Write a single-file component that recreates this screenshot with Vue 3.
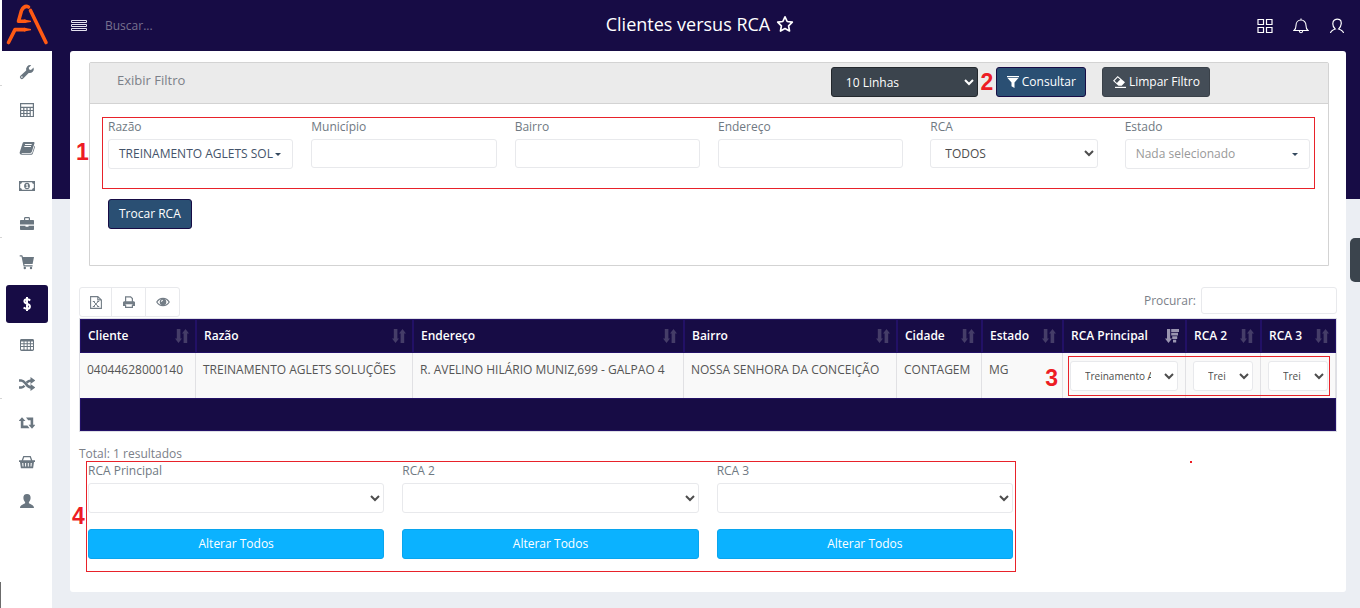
<script setup>
import { ref } from 'vue'

const tools = [
  { name: 'Configurações', icon: 'wrench' },
  { name: 'Calculadora', icon: 'calc', tick: true },
  { name: 'Cadastros', icon: 'book' },
  { name: 'Pagamentos', icon: 'money' },
  { name: 'Comercial', icon: 'briefcase' },
  { name: 'Compras', icon: 'cart', tick: true },
  { name: 'Vendas', icon: 'dollar', active: true }
]
const reports = [
  { name: 'Tabelas', icon: 'table' },
  { name: 'Transferências', icon: 'shuffle' },
  { name: 'Trocas', icon: 'retweet', tick: true },
  { name: 'Cesta', icon: 'basket' },
  { name: 'Usuário', icon: 'user' }
]
const groups = [tools, reports]

const icons = {
  wrench: '<path d="M14.6 3.6 12 5.9l-1.8-.4-.5-1.8L12.200 1.200A4.200 4.200 0 0 0 7.200 6.500L1.500 11.800a1.900 1.900 0 1 0 2.700 2.700L9.700 9a4.200 4.200 0 0 0 4.900-5.400ZM2.900 13.900a.8.8 0 1 1 0-1.600.8.8 0 0 1 0 1.600Z" fill="currentColor"/>',
  calc: '<path d="M1 1h14v14H1V1Zm1.200 1.200v2.600h11.600V2.200H2.200Zm0 3.900V8h2V6.100h-2Zm3.200 0V8h2V6.100h-2Zm3.200 0V8h2V6.100h-2Zm3.200 0V8h2V6.100h-2ZM2.200 9.100v1.800h2V9.100h-2Zm3.200 0v1.800h2V9.100h-2Zm3.200 0v1.800h2V9.100h-2Zm3.200 0v4.800h2V9.100h-2ZM2.200 12v1.900h2V12h-2Zm3.200 0v1.900h2V12h-2Zm3.200 0v1.900h2V12h-2Z" fill="currentColor" fill-rule="evenodd"/>',
  book: '<path d="M5.200 2h9.200c1 0 1.300.7 1 1.600l-2.500 8c-.3.900-.9 1.300-1.700 1.300H3.100c-.8 0-.8.700.1.900h8.300c1 0 1.600-.4 1.900-1.300l2.200-6.800c.5.400.5.900.3 1.600l-2 6c-.3 1-1 1.500-2 1.500H2.800c-1.600 0-2.500-1.500-2-2.700L3.500 3.500C3.800 2.500 4.300 2 5.200 2Zm1 2-.3 1h6.600l.3-1H6.200Zm-.7 2-.3 1h6.600l.3-1H5.500Z" fill="currentColor" fill-rule="evenodd"/>',
  money: '<path d="M0 3h16v10H0V3Zm3 1.300A2 2 0 0 1 1.200 6v4A2 2 0 0 1 3 11.700h10A2 2 0 0 1 14.800 10V6A2 2 0 0 1 13 4.300H3Z" fill="currentColor" fill-rule="evenodd"/><path d="M8 4.800c2 0 2.900 1.500 2.900 3.200S10 11.200 8 11.200 5.100 9.700 5.100 8 6 4.800 8 4.800Zm-.2 1.300-1.100.8.500.6.400-.2v2h-.9v.8h2.700v-.8h-.7v-3.200h-.9Z" fill="currentColor" fill-rule="evenodd"/>',
  briefcase: '<path d="M5 4V2.500C5 1.700 5.500 1 6.300 1h3.400c.8 0 1.300.7 1.300 1.500V4h3c.6 0 1 .4 1 1v3.500H1V5c0-.6.400-1 1-1h3Zm1.200 0h3.600V2.200H6.200V4ZM1 9.700h5.500v1h3v-1H15V13c0 .6-.4 1-1 1H2c-.6 0-1-.4-1-1V9.700Z" fill="currentColor" fill-rule="evenodd"/>',
  cart: '<path d="M.7 1.300h2.500L4 3h11l-1.400 7H5.300l.3 1.200h8v1.200h-9L2.500 2.500H.7V1.300Z" fill="currentColor"/><circle cx="5.800" cy="14" r="1.200" fill="currentColor"/><circle cx="12" cy="14" r="1.200" fill="currentColor"/>',
  dollar: '<path d="M11.200 4.500C10.300 3.700 9.200 3.300 8 3.300c-1.700 0-2.600.9-2.600 2 0 3 5.500 1.900 5.500 5.100 0 1.500-1.200 2.400-3 2.400-1.300 0-2.400-.4-3.300-1.200M8 1v14" fill="none" stroke="currentColor" stroke-width="2"/>',
  table: '<path d="M2.500 2h11c.8 0 1.500.6 1.500 1.400v9.200c0 .8-.7 1.400-1.500 1.400h-11c-.8 0-1.500-.6-1.500-1.400V3.400C1 2.600 1.700 2 2.500 2ZM2 4.600v1.700h2.500V4.600H2Zm3.500 0v1.700h2.200V4.600H5.500Zm3.200 0v1.700h2.200V4.600H8.700Zm3.200 0v1.700H14V4.600h-2.100ZM2 7.300V9h2.500V7.300H2Zm3.500 0V9h2.200V7.300H5.500Zm3.200 0V9h2.200V7.300H8.700Zm3.200 0V9H14V7.300h-2.100ZM2 10v2.500h2.500V10H2Zm3.500 0v2.500h2.200V10H5.500Zm3.200 0v2.500h2.200V10H8.700Zm3.200 0v2.500H14V10h-2.100Z" fill="currentColor" fill-rule="evenodd"/>',
  shuffle: '<path d="M0 4.500h2.300c2 0 3 1.200 4.500 3.200 1.800 2.600 3 3.800 5.600 3.800M0 11.500h2.300c1.400 0 2.300-.6 3.200-1.700M7.600 6.600C8.900 5.100 10.200 4.500 12.400 4.500" fill="none" stroke="currentColor" stroke-width="2.400"/><path d="m11.500 1 5 3.500-5 3.500V1Zm0 7 5 3.500-5 3.500V8Z" fill="currentColor"/>',
  retweet: '<path d="M3 2.200 6.500 6H4.400v4.500h4l2.100 2.700H1.800V6H-.5L3 2.200Zm4 .4h7.200V9.800h2.300L13 13.800 9.500 9.800h2.100V5.300H9.200L7 2.600Z" fill="currentColor"/>',
  basket: '<path d="M4.300 2h7.400l1.600 4.300H16V8h-1l-.9 6.200H1.900L1 8H0V6.300h2.700L4.300 2Zm.9 1.200L4.100 6.300h7.800l-1.100-3.100H5.200ZM3.200 9l.3 3.500h1L4.300 9H3.200Zm2.900 0v3.500h1V9h-1Zm2.700 0v3.500h1V9h-1Zm2.900 0-.2 3.500h1l.3-3.500h-1.100Z" fill="currentColor" fill-rule="evenodd"/>',
  user: '<path d="M8 1c2.500 0 3.800 1.600 3.600 4.100-.1 1.600-.7 3-1.700 3.900v1.200c.7.800 5.100 1.300 5.100 4.800H1C1 11.500 5.400 11 6.100 10.200V9c-1-.9-1.600-2.300-1.700-3.900C4.200 2.600 5.500 1 8 1Z" fill="currentColor"/>'
}

const columns = [
  { label: 'Cliente', width: 116 },
  { label: 'Razão', width: 217 },
  { label: 'Endereço', width: 271 },
  { label: 'Bairro', width: 213 },
  { label: 'Cidade', width: 85 },
  { label: 'Estado', width: 81 },
  { label: 'RCA Principal', width: 123, sorted: true },
  { label: 'RCA 2', width: 75 },
  { label: 'RCA 3', width: 75 }
]
const rows = [
  ['04044628000140', 'TREINAMENTO AGLETS SOLUÇÕES', 'R. AVELINO HILÁRIO MUNIZ,699 - GALPAO 4', 'NOSSA SENHORA DA CONCEIÇÃO', 'CONTAGEM', 'MG']
]
const rcas = ['RCA Principal', 'RCA 2', 'RCA 3']
const search = ref('')
</script>

<template>
  <div class="app">
    <aside class="sidebar">
      <a class="logo" href="#" aria-label="Início">
        <svg viewBox="0 0 50 51" width="50" height="51">
          <g fill="none" stroke="#ff5a14" stroke-width="3.600" stroke-linecap="round" stroke-linejoin="round">
            <path d="M44 42.500 28.500 10.500" />
            <path d="M26.500 7Q22.500 5 19.500 10.500L16.500 21.300H23" />
            <path d="M6.500 42.500 13 29.600H23" />
          </g>
          <path d="M22 19.500 29 20.700V22L22 23.100ZM22 27.800 29 29V30.300L22 31.400Z" fill="#ff5a14" />
        </svg>
      </a>
      <nav class="menu" aria-label="Menu principal">
        <ul v-for="(group, g) in groups" :key="g" class="group">
          <li v-for="item in group" :key="item.name" :class="{ active: item.active, tick: item.tick }">
            <a href="#" :aria-label="item.name">
              <svg viewBox="0 0 16 16" width="16" height="16" v-html="icons[item.icon]"></svg>
            </a>
          </li>
        </ul>
      </nav>
    </aside>

    <div class="page">
      <header class="topbar">
        <div class="left">
          <button class="plain" type="button" aria-label="Alternar menu">
            <svg viewBox="0 0 16 14" width="16" height="14"><path d="M.5 1.500h15v2H.5zM.5 5.500h15v2H.5zM.5 9.500h15v2H.5z" fill="none" stroke="#e4e2ee" /></svg>
          </button>
          <input class="find" type="text" placeholder="Buscar..." aria-label="Buscar" />
        </div>
        <h1>Clientes versus RCA
          <svg viewBox="0 0 18 18" width="18" height="18"><path d="m9 1.800 2.200 4.700 5.100.7-3.700 3.600.9 5.200L9 13.500 4.500 16l.9-5.200L1.700 7.200l5.100-.7Z" fill="none" stroke="#fff" stroke-width="1.700" stroke-linejoin="round" /></svg>
        </h1>
        <div class="right">
          <button class="plain" type="button" aria-label="Aplicativos">
            <svg viewBox="0 0 16 16" width="16" height="16"><path d="M1 1.500h5.500v5H1zM9.500 1.500H15v5H9.500zM1 9.500h5.500v5H1zM9.500 9.500H15v5H9.500z" fill="none" stroke="#fff" stroke-width="1.200" /></svg>
          </button>
          <button class="plain" type="button" aria-label="Notificações">
            <svg viewBox="0 0 16 16" width="16" height="16"><path d="M1 12.500c1.700-1.200 2-2.500 2-5C3 4.200 5 2 8 2s5 2.200 5 5.500c0 2.500.3 3.800 2 5H1ZM6.300 13q.3 1.800 1.700 1.800T9.700 13M8 .5V2" fill="none" stroke="#fff" stroke-width="1.100" /></svg>
          </button>
          <button class="plain" type="button" aria-label="Minha conta">
            <svg viewBox="0 0 16 16" width="16" height="16"><path d="M1.500 15c.3-2 1.500-2.800 4.700-4C2.800 8.200 3.400 3 5.600 1.900 7 1 9.300 1 10.700 1.600c2.400 1.300 2 6.700-1 9.400 3.300 1.200 4.500 2 4.800 4" fill="none" stroke="#fff" stroke-width="1.200" /></svg>
          </button>
        </div>
      </header>

      <main class="card">
        <section class="filter">
          <div class="filter-head">
            <span>Exibir Filtro</span>
            <div class="actions">
              <select class="lines" aria-label="Linhas por página"><option>10 Linhas</option></select>
              <span class="mark mark-2">2</span>
              <button class="btn blue" type="button">
                <svg viewBox="0 0 12 12" width="12" height="12"><path d="M0 0h12v1.200H0ZM.5 2h11L7.500 6.500V12l-3-1.800V6.500Z" fill="#fff" /></svg>
                Consultar
              </button>
              <button class="btn gray" type="button">
                <svg viewBox="0 0 13 12" width="13" height="12"><path d="M4.700 0 12 6.200 8.700 9.800H5.500L0 4.800ZM4.700 1.500 1.600 4.800l2.300 2.100 3.300-3.300Z" fill="#fff" fill-rule="evenodd" /><path d="M2 10.800h11V12H2Z" fill="#fff" /></svg>
                Limpar Filtro
              </button>
            </div>
          </div>
          <div class="filter-body">
            <div class="fields marked">
              <span class="mark mark-1">1</span>
              <div class="field">
                <label for="razao">Razão</label>
                <button id="razao" class="picker" type="button"><span>TREINAMENTO AGLETS SOL</span><i class="caret"></i></button>
              </div>
              <div class="field"><label for="municipio">Município</label><input id="municipio" class="control" type="text" /></div>
              <div class="field"><label for="bairro">Bairro</label><input id="bairro" class="control" type="text" /></div>
              <div class="field"><label for="endereco">Endereço</label><input id="endereco" class="control" type="text" /></div>
              <div class="field inner">
                <label for="rca">RCA</label>
                <select id="rca" class="control"><option>TODOS</option></select>
              </div>
              <div class="field">
                <label for="estado">Estado</label>
                <button id="estado" class="picker empty" type="button"><span>Nada selecionado</span><i class="caret"></i></button>
              </div>
            </div>
            <button class="btn blue" type="button">Trocar RCA</button>
          </div>
        </section>

        <section class="results">
          <div class="toolbar">
            <div class="exports">
              <button type="button" aria-label="Exportar para Excel">
                <svg viewBox="0 0 12 14" width="12" height="14"><path d="M.6 1.600h7.200l3.600 3.300v8.500H.6ZM7.800 1.600v3.300h3.600" fill="none" stroke="currentColor" stroke-width="1.100" /><path d="m3.600 6.500 4.600 5M8.200 6.500l-4.600 5M2.800 6.500h2M7.200 6.500h2M2.800 11.500h2M7.200 11.500h2" stroke="currentColor" fill="none" /></svg>
              </button>
              <button type="button" aria-label="Imprimir">
                <svg viewBox="0 0 12 12" width="12" height="12"><path d="M2.600 6V.8h5L9.400 2.600V6M2.600 8.800v2.500h6.800V8.800" fill="none" stroke="currentColor" stroke-width="1.200" /><path d="M1.500 5.200h9c.8 0 1.500.6 1.500 1.400V10H9.500V8.200h-7V10H0V6.600c0-.8.700-1.400 1.500-1.400Z" fill="currentColor" /></svg>
              </button>
              <button type="button" aria-label="Colunas visíveis">
                <svg viewBox="0 0 14 10" width="14" height="10"><path d="M.8 5C3.600.1 10.400.1 13.200 5 10.400 9.900 3.600 9.900.8 5Z" fill="none" stroke="currentColor" stroke-width="1.200" /><path d="M7 1.700a3.300 3.300 0 1 1 0 6.600 3.300 3.300 0 0 1 0-6.600Zm0 1A2 2 0 0 0 5 4.800h1A1.200 1.200 0 0 1 7 3.600Z" fill="currentColor" fill-rule="evenodd" /></svg>
              </button>
            </div>
            <label class="search">Procurar: <input v-model="search" type="search" /></label>
          </div>

          <table>
            <colgroup><col v-for="c in columns" :key="c.label" :style="{ width: c.width + 'px' }" /></colgroup>
            <thead>
              <tr>
                <th v-for="c in columns" :key="c.label" scope="col">
                  <div class="head">
                    <span>{{ c.label }}</span>
                    <svg v-if="c.sorted" class="sorted" viewBox="0 0 14 14" width="14" height="14"><path d="M2 0h3.200v9.500H7L3.500 14 0 9.500h2ZM6.200 0H14v3.100H6.200ZM6.200 3.700H13v2.900H6.200ZM7.200 7.200h5v2.900h-5ZM8 10.700h3.200v2.900H8Z" fill="currentColor" /></svg>
                    <svg v-else viewBox="0 0 14 14" width="14" height="14"><path d="M1.800 0h3.600v9.500H7L3.500 14 0 9.500h1.800ZM10.500 0 14 4.500h-1.800V14H8.600V4.500H7Z" fill="currentColor" /></svg>
                  </div>
                </th>
              </tr>
            </thead>
            <tbody>
              <tr v-for="row in rows" :key="row[0]">
                <td v-for="(cell, i) in row" :key="i">{{ cell }}<span v-if="i === 5" class="mark mark-3">3</span></td>
                <td v-for="(r, i) in rcas" :key="r" class="pick" :class="{ first: i === 0 }">
                  <select class="control" :aria-label="r"><option>Treinamento Aglets</option></select>
                </td>
              </tr>
            </tbody>
            <tfoot><tr><td colspan="9"></td></tr></tfoot>
          </table>

          <p class="total">Total: 1 resultados</p>
          <div class="bulk">
            <div class="bulk-inner marked">
              <span class="mark mark-4">4</span>
              <div v-for="(r, i) in rcas" :key="r" class="bulk-item">
                <label :for="'bulk' + i">{{ r }}</label>
                <select :id="'bulk' + i" class="control"><option></option></select>
                <button class="btn cyan" type="button">Alterar Todos</button>
              </div>
            </div>
            <i class="dot"></i>
          </div>
        </section>
      </main>
      <button class="side-handle" type="button" aria-label="Abrir painel"></button>
    </div>
  </div>
</template>

<style>
body { background: #ebeef3; }
</style>

<style scoped>
*, *::before, *::after { box-sizing: border-box; }
.app {
  display: flex;
  min-height: 100vh;
  font-family: "Open Sans", "Noto Sans", sans-serif;
  font-size: 12px;
  line-height: 18px;
  color: #7b8088;
}
button, input, select { font: inherit; color: inherit; margin: 0; }
button { cursor: pointer; }
ul { list-style: none; margin: 0; padding: 0; }

.sidebar { position: relative; flex: 0 0 52px; background: #fff; }
.sidebar::after { content: ""; position: absolute; left: 0; bottom: 0; width: 1px; height: 26px; background: #6b6b6b; }
.logo { display: block; height: 51px; margin-left: 2px; background: #170c45; }
.logo svg { display: block; }
.menu { padding: 2px 4px 0 6px; }
.group + .group { display: grid; gap: 1px; margin-top: 3px; }
.group li { position: relative; }
.group a {
  display: flex; align-items: center; justify-content: center;
  height: 38px; border-radius: 3px; color: #6a7680;
}
.group .active { margin-top: 4px; }
.group .active a { background: #170c45; color: #fff; }
.tick::before {
  content: ""; position: absolute; left: -6px; top: -6px;
  width: 2px; height: 1px; background: #d5d5d5;
}

.page {
  position: relative; flex: 1; min-width: 0; padding: 0 14px 16px 18px;
  background: linear-gradient(#170c45 199px, #ebeef3 199px);
}
.topbar { display: grid; grid-template-columns: 1fr auto 1fr; align-items: center; height: 51px; padding-left: 1px; color: #fff; }
.left { display: flex; align-items: center; gap: 18px; }
.right { display: flex; justify-content: flex-end; gap: 20px; padding-right: 1px; }
.plain { display: flex; padding: 0; border: 0; background: none; }
.find { width: 160px; padding: 0; border: 0; background: none; outline: 0; font-size: 12px; }
.find::placeholder { color: #77718f; opacity: 1; }
h1 { display: flex; align-items: center; gap: 6px; margin: 0; padding: 0 17px 4px 0; font-size: 18px; line-height: 24px; font-weight: 400; }

.card { padding: 11px 9px 20px; border-radius: 3px; background: #fff; }
.filter { margin: 0 8px 0 10px; border: 1px solid #d3d3d3; border-radius: 2px 2px 0 0; }
.filter-head {
  display: flex; align-items: flex-start; justify-content: space-between;
  padding: 4px 118px 6px 27px; border-bottom: 1px solid #d3d3d3; background: #ebebeb; font-size: 13px;
}
.filter-head > span { padding-top: 4px; }
.actions { display: flex; }
.actions .gray { margin-left: 16px; }
.actions .btn { padding: 0 9px 0 10px; }
.mark-2 { width: 18px; text-align: center; }
.btn {
  display: inline-flex; align-items: center; justify-content: center; gap: 3px;
  height: 30px; padding: 0 10px; border: 1px solid; border-radius: 3px; color: #fff; font-size: 12px; white-space: nowrap;
}
.blue { border-color: #170c45; background: #2a4f73; }
.gray { border-color: #3a4149; background: #444d57; }
.cyan { width: 100%; border-color: #09a5ee; background: #0bb2ff; }
.lines { width: 147px; height: 30px; padding: 0 10px; border: 1px solid #23282d; border-radius: 3px; background: #3b444d; color: #fff; font-size: 12px; }

.filter-body { padding: 13px 18px 36px; }
.fields { position: relative; display: grid; grid-template-columns: repeat(6, minmax(0, 1fr)); gap: 18px; margin-bottom: 30px; }
.marked::after { content: ""; position: absolute; border: 1px solid #e8222a; pointer-events: none; }
.fields::after { inset: 0 -5px -20px -6px; }
.inner { padding: 0 9px; }
label { display: block; }
.field label, .bulk-item label { font-weight: 500; color: #6f7982; margin-bottom: 3px; }
.field label { padding-top: 1px; }
.control {
  display: block; width: 100%; height: 29px; padding: 0 10px; border: 1px solid #e8e9ec;
  border-radius: 3px; background: #fff; color: #4d4d4d;
}
.picker {
  display: flex; align-items: center; justify-content: space-between; width: 100%; height: 30px;
  padding: 0 11px 0 10px; border: 1px solid #e8e9ec; border-radius: 3px; background: #fff; color: #44536a; white-space: nowrap;
}
.empty { color: #999; }
.caret { border: 3px solid transparent; border-top-color: #34495e; border-bottom: 0; }

.mark { color: #ed1c24; font: bold 23px/30px "Liberation Sans", Arial, sans-serif; }
.mark-1 { position: absolute; left: -32px; top: 20px; }
.mark-3 { position: absolute; right: 4px; top: 10px; }
.mark-4 { position: absolute; left: -16px; top: 39px; }

.toolbar { display: flex; align-items: flex-end; justify-content: space-between; margin-top: 21px; padding-bottom: 1px; }
.exports { display: flex; }
.exports button {
  display: flex; align-items: center; justify-content: center; width: 35px; height: 30px; padding: 0;
  border: 1px solid #e8e9ec; background: #fff; color: #737d86;
}
.exports button + button { margin-left: -1px; }
.exports button:first-child { width: 33px; border-radius: 3px 0 0 3px; }
.exports button:last-child { border-radius: 0 3px 3px 0; }
.search { display: flex; align-items: center; gap: 5px; padding-bottom: 3px; }
.search input { width: 136px; height: 27px; border: 1px solid #e8e9ec; border-radius: 3px; background: #fff; }

table { width: 100%; table-layout: fixed; border-collapse: separate; border-spacing: 0; border: 1px solid #dedfe5; }
th { height: 34px; padding: 0 6px 0 7px; border: 1px solid #221066; background: #170c45; color: #fff; font-weight: 600; text-align: left; white-space: nowrap; }
.head { display: flex; align-items: center; justify-content: space-between; }
.head svg { color: #453d68; }
.head .sorted { color: #9a95b0; }
tbody td { position: relative; height: 45px; padding: 8px 0 0 7px; border-right: 1px solid #e1e1e4; background: #f9f9f9; color: #555; vertical-align: top; white-space: nowrap; }
tbody .pick { padding: 8px 7px 0; }
.pick .control { height: 30px; font-size: 10px; }
.first::after { content: ""; position: absolute; z-index: 1; left: 5px; top: 3px; width: 262px; height: 40px; border: 1px solid #e8222a; pointer-events: none; }
tfoot td { height: 33px; border: 1px solid #221066; background: #170c45; }

.total { margin: 14px 0 0; line-height: 16px; }
.bulk { position: relative; padding: 0 9px; }
.bulk-inner { position: relative; display: grid; grid-template-columns: repeat(3, 1fr); gap: 18px; width: calc(75% - 5px); padding-bottom: 13px; }
.bulk-inner::after { inset: -1px -3px 0 -2px; }
.bulk-item .control { height: 30px; margin-bottom: 16px; }
.dot { position: absolute; left: 1111px; top: -1px; width: 2px; height: 2px; background: #ed1c24; }
.side-handle { position: absolute; right: 0; top: 238px; width: 10px; height: 44px; padding: 0; border: 0; border-radius: 5px 0 0 5px; background: #3b444d; }
</style>
